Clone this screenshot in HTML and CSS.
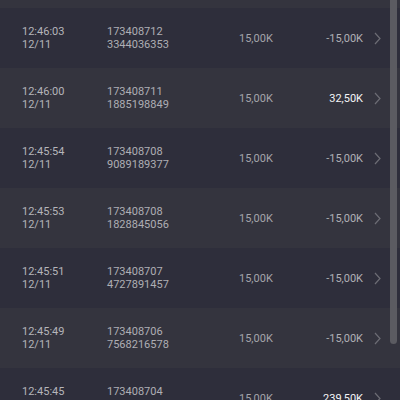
FILE: index.html
```html
<!DOCTYPE html>
<html lang="en">
<head>
  <meta charset="UTF-8">
  <meta name="viewport" content="width=device-width, initial-scale=1">
  <title>Transactions</title>
  <link rel="stylesheet" href="styles.css">
</head>
<body>
  <div class="list">
    <div class="row">
      <div class="time">12:46:03<br>12/11</div>
      <div class="ticket">173408712<br>3344036353</div>
      <div class="stake">15,00K</div>
      <div class="result">-15,00K</div>
      <svg class="chev" viewBox="0 0 7 13"><path d="M1 1 L6 6.5 L1 12"/></svg>
    </div>
    <div class="row">
      <div class="time">12:46:00<br>12/11</div>
      <div class="ticket">173408711<br>1885198849</div>
      <div class="stake">15,00K</div>
      <div class="result win">32,50K</div>
      <svg class="chev" viewBox="0 0 7 13"><path d="M1 1 L6 6.5 L1 12"/></svg>
    </div>
    <div class="row">
      <div class="time">12:45:54<br>12/11</div>
      <div class="ticket">173408708<br>9089189377</div>
      <div class="stake">15,00K</div>
      <div class="result">-15,00K</div>
      <svg class="chev" viewBox="0 0 7 13"><path d="M1 1 L6 6.5 L1 12"/></svg>
    </div>
    <div class="row">
      <div class="time">12:45:53<br>12/11</div>
      <div class="ticket">173408708<br>1828845056</div>
      <div class="stake">15,00K</div>
      <div class="result">-15,00K</div>
      <svg class="chev" viewBox="0 0 7 13"><path d="M1 1 L6 6.5 L1 12"/></svg>
    </div>
    <div class="row">
      <div class="time">12:45:51<br>12/11</div>
      <div class="ticket">173408707<br>4727891457</div>
      <div class="stake">15,00K</div>
      <div class="result">-15,00K</div>
      <svg class="chev" viewBox="0 0 7 13"><path d="M1 1 L6 6.5 L1 12"/></svg>
    </div>
    <div class="row">
      <div class="time">12:45:49<br>12/11</div>
      <div class="ticket">173408706<br>7568216578</div>
      <div class="stake">15,00K</div>
      <div class="result">-15,00K</div>
      <svg class="chev" viewBox="0 0 7 13"><path d="M1 1 L6 6.5 L1 12"/></svg>
    </div>
    <div class="row">
      <div class="time">12:45:45<br>12/11</div>
      <div class="ticket">173408704<br>5520917734</div>
      <div class="stake">15,00K</div>
      <div class="result win">239,50K</div>
      <svg class="chev" viewBox="0 0 7 13"><path d="M1 1 L6 6.5 L1 12"/></svg>
    </div>
  </div>
  <div class="scroll-thumb"></div>
</body>
</html>
```

FILE: styles.css
```css
html, body {
  margin: 0;
  padding: 0;
  height: 400px;
  overflow: hidden;
  background-color: #2e2e3b;
}

body {
  font-family: Roboto, "Liberation Sans", Arial, sans-serif;
  font-size: 11px;
  line-height: 13px;
  color: #b5b5ba;
  position: relative;
}

.list {
  padding-top: 8px;
  background-color: #34343e;
}

.row {
  display: flex;
  align-items: center;
  height: 60px;
  padding: 0 19px 0 22px;
  background-color: #2e2e3b;
}

.row:nth-child(even) {
  background-color: #34343e;
}

.time {
  width: 85px;
}

.ticket {
  width: 132px;
  color: #aeaeb4;
}

.stake {
  width: 64px;
  color: #a4a4aa;
}

.result {
  width: 60px;
  text-align: right;
  color: #b0b0b5;
}

.result.win {
  color: #f4f4f6;
}

.chev {
  width: 7px;
  height: 13px;
  margin-left: 11px;
  fill: none;
  stroke: #6c6c74;
  stroke-width: 1.2;
}

/* overlay scrollbar */
.scroll-thumb {
  position: absolute;
  top: 0;
  right: 3px;
  width: 7px;
  height: 344px;
  border-radius: 0 0 4px 4px;
  background-color: #5b5b61;
}
```
